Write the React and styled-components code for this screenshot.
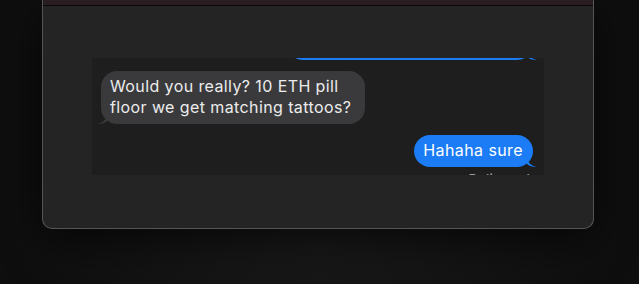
import React from 'react';
import styled, { createGlobalStyle } from 'styled-components';

const GlobalStyle = createGlobalStyle`
  html, body {
    margin: 0;
    padding: 0;
    height: 100%;
    background: #0d0d0d;
  }
  body {
    font-family: Inter, "Liberation Sans", Arial, sans-serif;
    -webkit-font-smoothing: antialiased;
  }
  #root {
    height: 100%;
  }
`;

const Page = styled.div`
  width: 639px;
  height: 284px;
  overflow: hidden;
  background:
    radial-gradient(ellipse 70% 60% at 50% 85%, #1a1a1a 0%, rgba(20,20,20,0) 70%),
    #0e0e0e;
  display: flex;
  justify-content: center;
  align-items: flex-start;
`;

const Window = styled.div`
  margin-left: -3px;
  width: 552px;
  height: 229px;
  box-sizing: border-box;
  border: 1px solid #555;
  border-top: none;
  border-radius: 0 0 10px 10px;
  background: #242424;
  box-shadow: 0 14px 40px rgba(0, 0, 0, 0.6);
  display: flex;
  flex-direction: column;
`;

const TitleBar = styled.div`
  height: 5px;
  background: #2a1d22;
  border-bottom: 1px solid #0a0a0a;
`;

const Body = styled.div`
  flex: 1;
  padding: 52px 49px 0 49px;
`;

const Chat = styled.div`
  height: 117px;
  background: #1e1e1e;
  overflow: hidden;
`;

const Thread = styled.div`
  margin-top: -30px;
  padding: 0 11px 0 9px;
  display: flex;
  flex-direction: column;
  gap: 11px;
`;

const Row = styled.div`
  display: flex;
  justify-content: ${p => (p.$mine ? 'flex-end' : 'flex-start')};
`;

const Bubble = styled.div`
  position: relative;
  max-width: 264px;
  box-sizing: border-box;
  padding: 5px 10px 6px 9px;
  border-radius: 16px;
  font-size: 16px;
  line-height: 21px;
  letter-spacing: 0.4px;
  color: ${p => (p.$mine ? '#ffffff' : '#ececec')};
  background: ${p => (p.$mine ? '#1b7cf5' : '#3a3a3c')};
`;

const Tail = styled.svg`
  position: absolute;
  bottom: 0;
  width: 10px;
  height: 12px;
  ${p => (p.$mine ? 'right: -4px;' : 'left: -4px; transform: scaleX(-1);')}
`;

const Status = styled.div`
  align-self: flex-end;
  margin-top: -7px;
  padding-right: 3px;
  font-size: 13px;
  font-weight: 500;
  letter-spacing: 0.3px;
  color: #9a9a9a;
`;

const Message = ({ mine, children, style }) => (
  <Row $mine={mine}>
    <Bubble $mine={mine} style={style}>
      {children}
      <Tail $mine={mine} viewBox="0 0 10 12">
        <path
          d="M0 0 C0 6 2 10 10 12 C5 12 2 11 0 9 Z"
          fill={mine ? '#1b7cf5' : '#3a3a3c'}
        />
      </Tail>
    </Bubble>
  </Row>
);

const App = () => (
  <>
    <GlobalStyle />
    <Page>
      <Window>
        <TitleBar />
        <Body>
          <Chat>
            <Thread>
              <Message mine style={{ width: 246 }}>&nbsp;</Message>
              <Message>Would you really? 10 ETH pill floor we get matching tattoos?</Message>
              <Message mine>Hahaha sure</Message>
              <Status>Delivered</Status>
            </Thread>
          </Chat>
        </Body>
      </Window>
    </Page>
  </>
);

export default App;
